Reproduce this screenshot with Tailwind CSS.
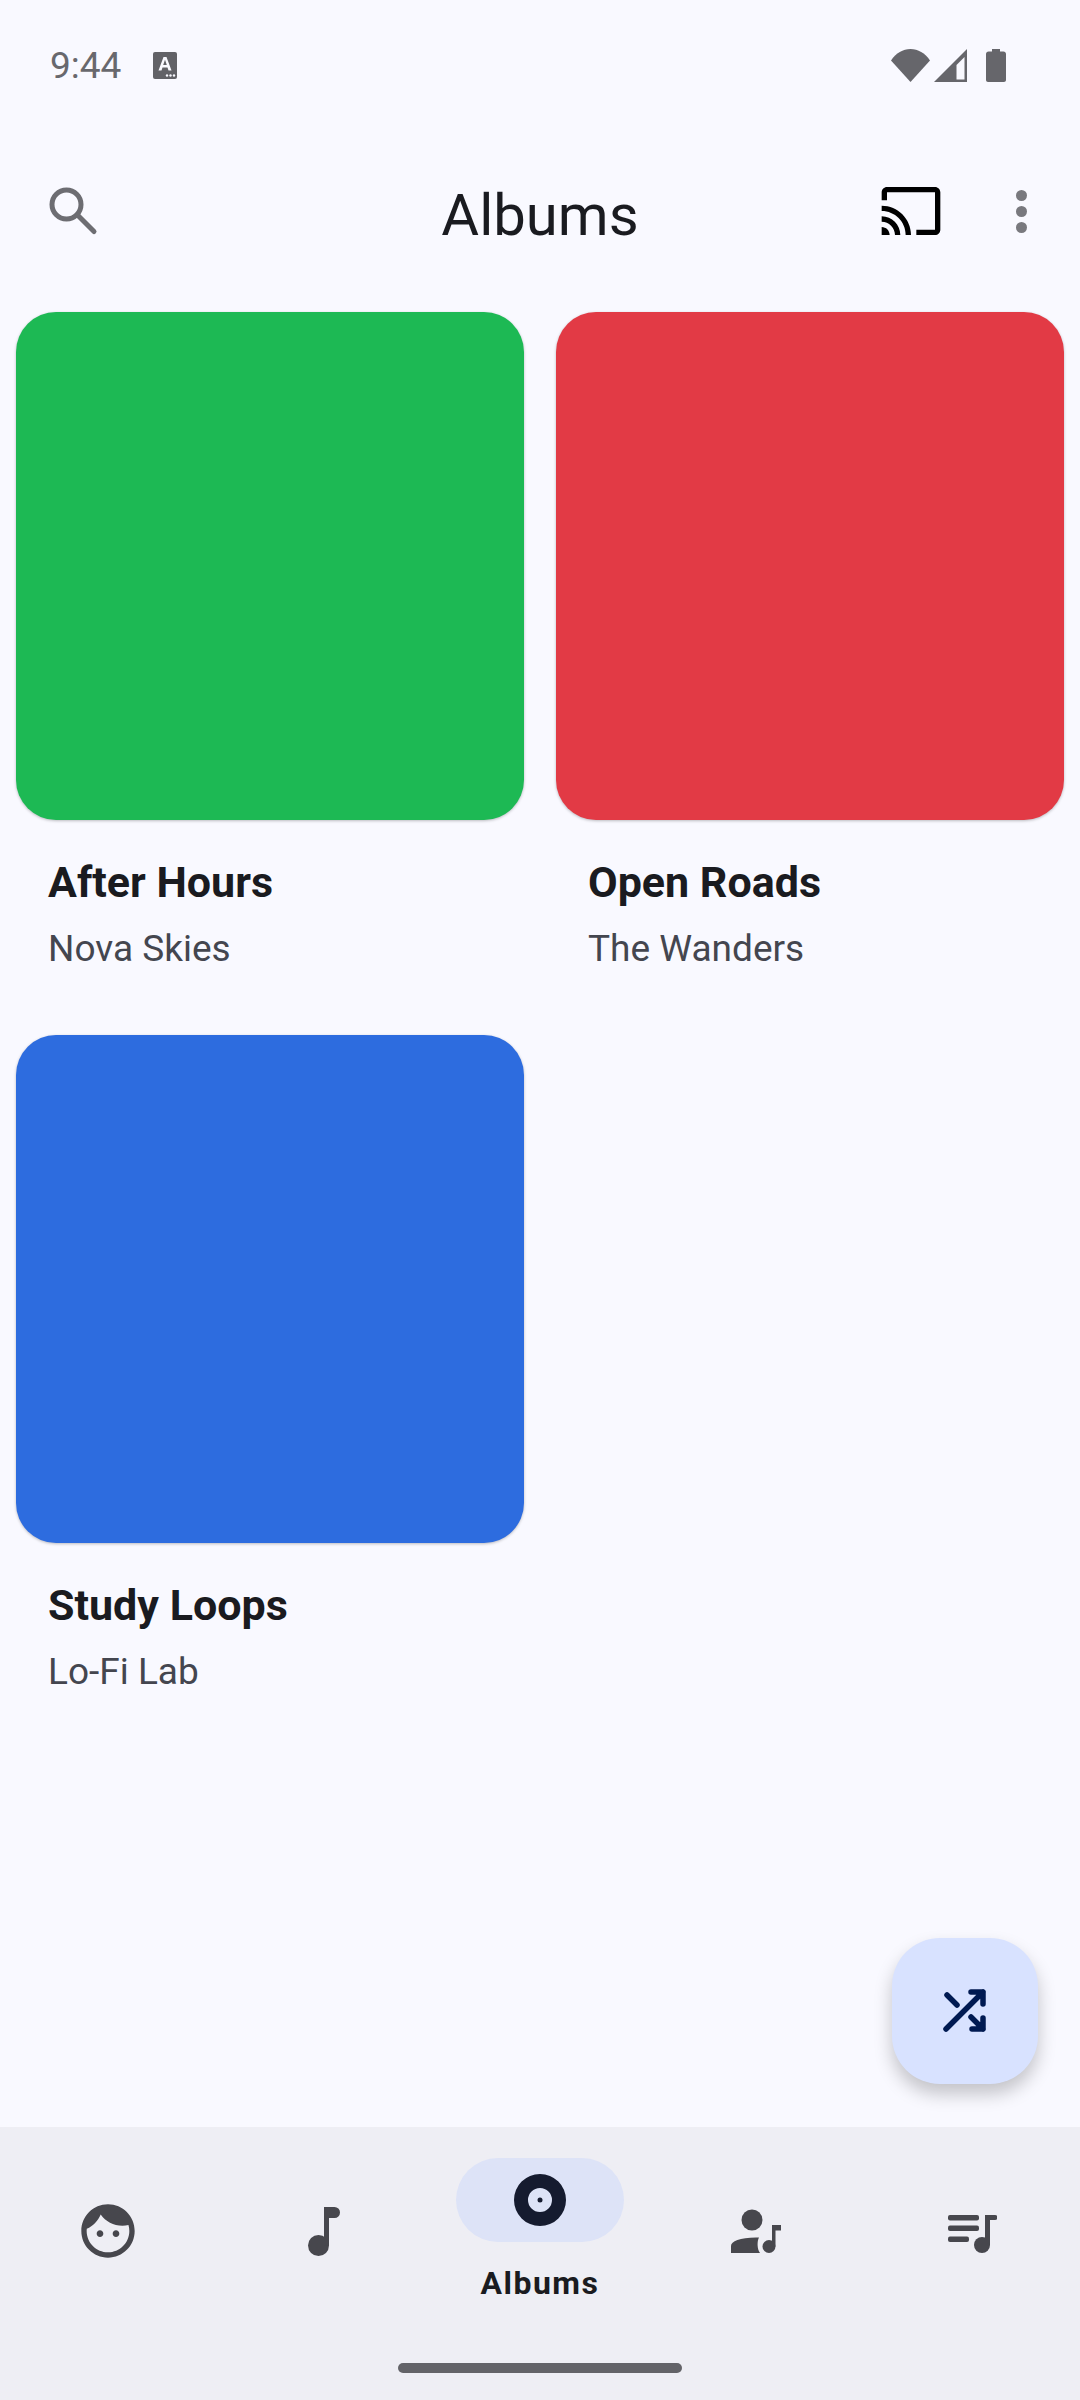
<!DOCTYPE html>
<html lang="en">
<head>
    <meta charset="UTF-8">
    <meta name="viewport" content="width=device-width, initial-scale=1.0">
    <title>Albums</title>
    <script src="https://cdn.jsdelivr.net/npm/@tailwindcss/browser@4"></script>
</head>
<body class="m-0">
    <div class="relative flex flex-col w-[1080px] h-[2400px] overflow-hidden bg-[#f9f9ff] font-[Roboto,sans-serif] text-[#1a1b20]">

        <!-- Status bar -->
        <div class="flex items-center justify-between h-[128px] pl-[50px] pr-[74px] pt-[2px]">
            <div class="flex items-center gap-[32px]">
                <span class="text-[37px] leading-none font-normal text-[#68686d]">9:44</span>
                <svg class="w-[24px] h-[27px]" viewBox="0 0 24 27">
                    <rect width="24" height="27" rx="2" fill="#626267"/>
                    <path d="M5.5 18.5 10.5 5h3l5 13.500h-3l-1-3h-5l-1 3zM10.200 13h3.600L12 7.800z" fill="#f9f9ff"/>
                    <circle cx="14" cy="23.500" r="1.200" fill="#f9f9ff"/><circle cx="17.500" cy="23.500" r="1.200" fill="#f9f9ff"/><circle cx="21" cy="23.500" r="1.200" fill="#f9f9ff"/>
                </svg>
            </div>
            <div class="flex items-center">
                <svg class="w-[39px] h-[33px]" viewBox="0 0 39 33"><path d="M0 11.500C5 4 12 0 19.500 0S34 4 39 11.500L19.500 33z" fill="#66666b"/></svg>
                <svg class="w-[33px] h-[33px] ml-[4px]" viewBox="0 0 33 33"><path d="M33 0V33H0zM30.500 8 22.500 16V30.500H30.500z" fill="#66666b" fill-rule="evenodd"/></svg>
                <svg class="w-[20px] h-[33px] ml-[19px]" viewBox="0 0 20 33"><path d="M6 0h8v2.500h3.500c1.400 0 2.500 1.100 2.500 2.500v26c0 1.100-.9 2-2 2H2c-1.100 0-2-.9-2-2V5c0-1.400 1.100-2.500 2.500-2.500H6z" fill="#66666b"/></svg>
            </div>
        </div>

        <!-- Top app bar -->
        <div class="relative flex items-center justify-between h-[184px] pl-[48px] pr-[53px]">
            <svg class="w-[50px] h-[50px] mt-[-16px]" viewBox="0 0 50 50" fill="none" stroke="#6d6d72" stroke-width="5" stroke-linecap="round">
                <circle cx="18.500" cy="17.500" r="14.500"/><path d="M29.500 28 46 44.500"/>
            </svg>
            <h1 class="absolute left-0 right-0 top-[53px] text-center text-[58px] leading-[68px] font-normal">Albums</h1>
            <div class="flex items-center gap-[73px] mt-[-18px]">
                <svg class="w-[64px] h-[64px]" viewBox="0 0 24 24" fill="#000"><path d="M21 3H3c-1.100 0-2 .9-2 2v3h2V5h18v14h-7v2h7c1.100 0 2-.9 2-2V5c0-1.100-.9-2-2-2zM1 18v3h3c0-1.660-1.340-3-3-3zm0-4v2c2.760 0 5 2.240 5 5h2c0-3.870-3.130-7-7-7zm0-4v2c4.970 0 9 4.030 9 9h2c0-6.080-4.930-11-11-11z"/></svg>
                <div class="flex flex-col gap-[5px]">
                    <span class="w-[11px] h-[11px] rounded-full bg-[#79797e]"></span>
                    <span class="w-[11px] h-[11px] rounded-full bg-[#79797e]"></span>
                    <span class="w-[11px] h-[11px] rounded-full bg-[#79797e]"></span>
                </div>
            </div>
        </div>

        <!-- Album grid -->
        <div class="grid grid-cols-2 gap-x-[32px] gap-y-[0px] px-[16px] content-start flex-1">
            <div class="h-[723px]">
                <div class="h-[508px] rounded-[40px] bg-[#1db954] shadow-[0_1px_3px_rgba(0,0,0,0.25)]"></div>
                <p class="mt-[38px] pl-[32px] text-[43px] leading-[48px] font-bold">After Hours</p>
                <p class="mt-[20px] pl-[32px] text-[37px] leading-[46px] text-[#44464f]">Nova Skies</p>
            </div>
            <div class="h-[723px]">
                <div class="h-[508px] rounded-[40px] bg-[#e23a45] shadow-[0_1px_3px_rgba(0,0,0,0.25)]"></div>
                <p class="mt-[38px] pl-[32px] text-[43px] leading-[48px] font-bold">Open Roads</p>
                <p class="mt-[20px] pl-[32px] text-[37px] leading-[46px] text-[#44464f]">The Wanders</p>
            </div>
            <div class="h-[723px]">
                <div class="h-[508px] rounded-[40px] bg-[#2d6cdf] shadow-[0_1px_3px_rgba(0,0,0,0.25)]"></div>
                <p class="mt-[38px] pl-[32px] text-[43px] leading-[48px] font-bold">Study Loops</p>
                <p class="mt-[20px] pl-[32px] text-[37px] leading-[46px] text-[#44464f]">Lo-Fi Lab</p>
            </div>
        </div>

        <!-- Shuffle FAB -->
        <div class="absolute left-[892px] top-[1938px] flex items-center justify-center w-[146px] h-[146px] rounded-[48px] bg-[#d8e2ff] shadow-[0_10px_18px_rgba(0,0,0,0.22)]">
            <svg class="w-[48px] h-[48px]" viewBox="0 0 48 48" fill="none" stroke="#001a52" stroke-width="5.500" stroke-linecap="round" stroke-linejoin="round">
                <path d="M5 42 42 5M30 5H42V17M6 8 16 18M30 30 42 42M42 31V42H31"/>
            </svg>
        </div>

        <!-- Bottom nav -->
        <nav class="relative grid grid-cols-5 h-[273px] bg-[#eeeef4]">
            <div class="flex justify-center pt-[72px]">
                <svg class="w-[64px] h-[64px]" viewBox="0 0 24 24" fill="#47474d"><path d="M9 11.750c-.69 0-1.250.56-1.250 1.250s.56 1.250 1.250 1.250 1.250-.56 1.250-1.250-.56-1.250-1.250-1.250zm6 0c-.69 0-1.250.56-1.250 1.250s.56 1.250 1.250 1.250 1.250-.56 1.250-1.250-.56-1.250-1.250-1.250zM12 2C6.480 2 2 6.480 2 12s4.480 10 10 10 10-4.480 10-10S17.520 2 12 2zm0 18c-4.410 0-8-3.590-8-8 0-.29.02-.58.05-.86 2.360-1.050 4.230-2.980 5.210-5.370C11.070 8.330 14.050 10 17.420 10c.78 0 1.530-.09 2.250-.26.21.71.33 1.470.33 2.260 0 4.410-3.590 8-8 8z"/></svg>
            </div>
            <div class="flex justify-center pt-[80px]">
                <svg class="w-[32px] h-[49px]" viewBox="0 0 32 49" fill="#47474d"><circle cx="10.500" cy="38.500" r="10.500"/><path d="M16 0h10.500a5.500 5.500 0 0 1 0 11H21V38.500H16z"/></svg>
            </div>
            <div class="flex flex-col items-center pt-[31px]">
                <div class="flex items-center justify-center w-[168px] h-[84px] rounded-full bg-[#dde3f7]">
                    <svg class="w-[52px] h-[52px]" viewBox="0 0 52 52" fill="#151b2f" fill-rule="evenodd"><path d="M26 0a26 26 0 1 1 0 52a26 26 0 1 1 0-52zM26 14a12 12 0 1 0 0 24a12 12 0 1 0 0-24z"/><circle cx="26" cy="26" r="2.500"/></svg>
                </div>
                <span class="mt-[22px] text-[32px] leading-[38px] font-bold tracking-[1.500px]">Albums</span>
            </div>
            <div class="flex justify-center pt-[82px]">
                <svg class="w-[50px] h-[44px]" viewBox="0 0 50 44" fill="#47474d"><circle cx="21" cy="11" r="10.500"/><path d="M0 44V37C0 32 10 28 28 28.500C26 32 26 40 29 44z"/><circle cx="38" cy="37.500" r="6.500"/><path d="M41 16H50V21.500H44.500V37.500H41z"/></svg>
            </div>
            <div class="flex justify-center pt-[88px]">
                <svg class="w-[49px] h-[38px]" viewBox="0 0 49 38" fill="#47474d"><rect y="0" width="31" height="5.500" rx="2"/><rect y="10.500" width="31" height="5.500" rx="2"/><rect y="21.500" width="21" height="5.500" rx="2"/><circle cx="34" cy="30" r="8"/><path d="M37 0H47a2.500 2.500 0 0 1 0 5H42V30H37z"/></svg>
            </div>
            <div class="absolute left-[398px] top-[236px] w-[284px] h-[10px] rounded-full bg-[#636368]"></div>
        </nav>
    </div>
</body>
</html>
